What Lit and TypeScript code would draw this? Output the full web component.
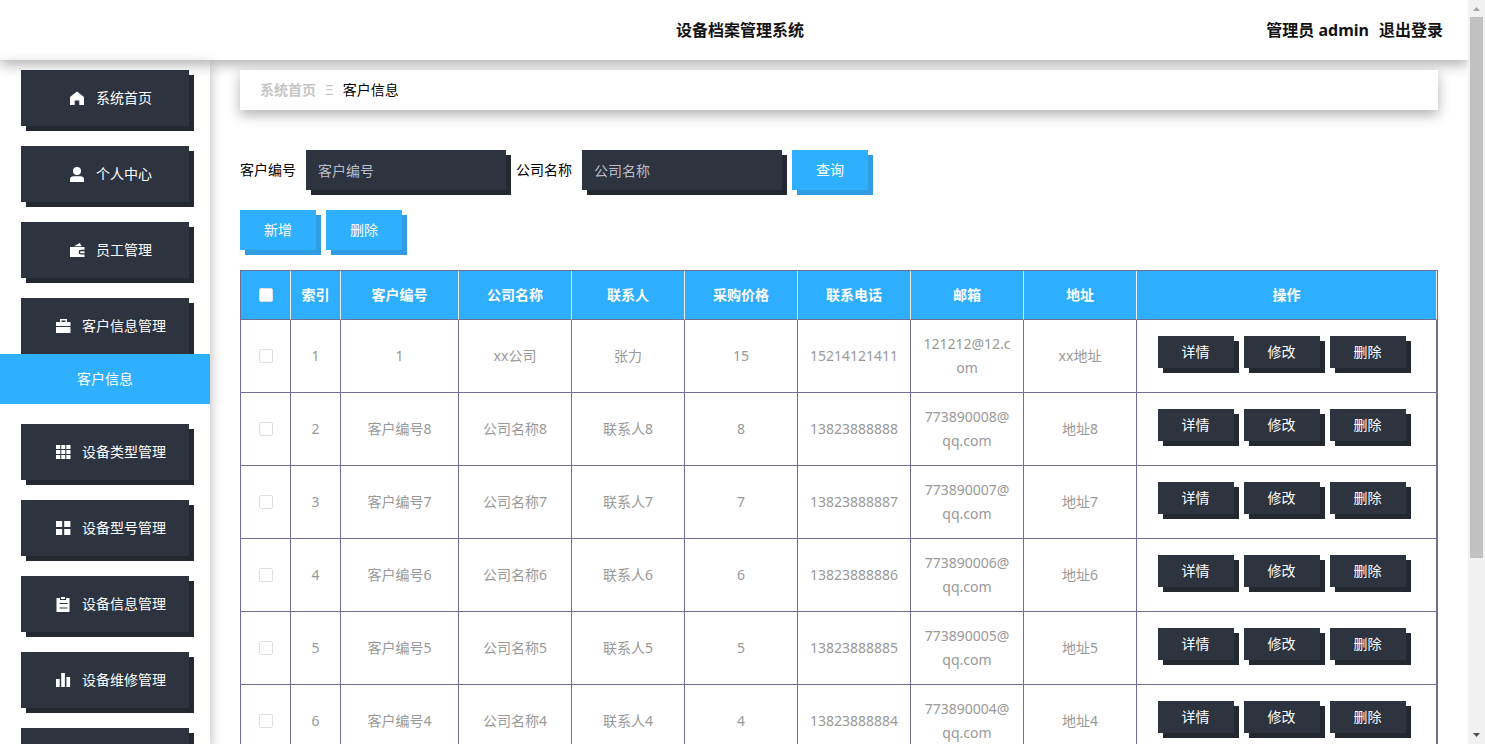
import { LitElement, html, css, svg, type TemplateResult } from "lit";
import { customElement, state } from "lit/decorators.js";

interface MenuItem {
  label: string;
  icon: string;
  children?: string[];
}

interface Customer {
  code: string;
  company: string;
  contact: string;
  price: string;
  phone: string;
  email: string;
  address: string;
}

const icons: Record<string, TemplateResult> = {
  home: svg`<path d="M7 0.5 14 6v8H9.300V9.500H4.700V14H0V6z"/>`,
  user: svg`<circle cx="7" cy="4" r="4"/><path d="M0 15v-2.500C0 10.300 1.500 9.300 3.500 9.300h7c2 0 3.500 1 3.500 3.200V15z"/>`,
  wallet: svg`<path d="M0 4h14.500v2.800H11a2.400 2.400 0 0 0 0 4.800h3.500V14H0z"/><path d="M4 3.300 9.800 0l1.900 3.300z"/><path d="M11 8.200h3.500v2H11a1 1 0 0 1 0-2z"/>`,
  briefcase: svg`<path d="M4 0h7v3h3.500v4H0V3h4zM5.500 1.500V3h4V1.500z" fill-rule="evenodd"/><path d="M0 8h14.500v6H0z"/>`,
  grid: svg`<path d="M0 0h4.300v4H0zM5.300 0h4v4h-4zM10.300 0h4.200v4h-4.200zM0 5h4.300v4H0zM5.300 5h4v4h-4zM10.300 5h4.200v4h-4.200zM0 10h4.300v4H0zM5.300 10h4v4h-4zM10.300 10h4.200v4h-4.200z"/>`,
  blocks: svg`<path d="M0 0h6.200v6H0zM8.200 0h6.200v6H8.200zM0 8h6.200v6H0zM8.200 8h6.200v6H8.200z"/>`,
  clipboard: svg`<path d="M0.500 1H4v2h6V1h3.500v14h-13zM3.500 6v1h8V6zM3.500 10.500v1h8v-1z" fill-rule="evenodd"/><path d="M5 0h4v2H5z"/>`,
  chart: svg`<path d="M0 6h3.700v8H0zM5.200 0h3.700v14H5.200zM10.400 4h3.700v10h-3.700z"/>`,
};

const menu: MenuItem[] = [
  { label: "系统首页", icon: "home" },
  { label: "个人中心", icon: "user" },
  { label: "员工管理", icon: "wallet" },
  { label: "客户信息管理", icon: "briefcase", children: ["客户信息"] },
  { label: "设备类型管理", icon: "grid" },
  { label: "设备型号管理", icon: "blocks" },
  { label: "设备信息管理", icon: "clipboard" },
  { label: "设备维修管理", icon: "chart" },
  { label: "设备保养管理", icon: "grid" },
];

const customers: Customer[] = [
  { code: "1", company: "xx公司", contact: "张力", price: "15", phone: "15214121411", email: "121212@12.com", address: "xx地址" },
  ...[8, 7, 6, 5, 4].map((n) => ({
    code: `客户编号${n}`,
    company: `公司名称${n}`,
    contact: `联系人${n}`,
    price: `${n}`,
    phone: `1382388888${n}`,
    email: `77389000${n}@qq.com`,
    address: `地址${n}`,
  })),
];

const columns = ["客户编号", "公司名称", "联系人", "采购价格", "联系电话", "邮箱", "地址"];

@customElement("side-menu")
export class SideMenu extends LitElement {
  static styles = css`
    :host {
      display: block;
      flex: none;
      width: 210px;
      box-sizing: border-box;
      padding-top: 10px;
      box-shadow: 0 5px 12px rgba(0, 0, 0, 0.3);
    }
    .item {
      display: flex;
      align-items: center;
      justify-content: center;
      gap: 12px;
      width: 168px;
      height: 56px;
      margin: 0 auto 20px;
      padding: 0 0 0 12px;
      border: 0;
      background: #2d333f;
      box-shadow: 5px 5px 0 #232831;
      color: #fff;
      font: inherit;
      cursor: pointer;
    }
    .item.open {
      margin-bottom: 0;
    }
    .icon {
      width: 14px;
      height: 14px;
      fill: #fff;
      overflow: visible;
    }
    .child {
      position: relative;
      display: block;
      margin-bottom: 20px;
      background: #2eb0ff;
      color: #fff;
      line-height: 50px;
      text-align: center;
      text-decoration: none;
    }
  `;

  render() {
    return html`<nav>
      ${menu.map(
        (m) => html`
          <button class="item ${m.children ? "open" : ""}">
            <svg class="icon" viewBox="0 0 14 14" aria-hidden="true">${icons[m.icon]}</svg>
            <span>${m.label}</span>
          </button>
          ${m.children?.map((c) => html`<a class="child" href="#">${c}</a>`)}
        `,
      )}
    </nav>`;
  }
}

@customElement("scroll-track")
export class ScrollTrack extends LitElement {
  static styles = css`
    :host {
      display: flex;
      flex: none;
      flex-direction: column;
      width: 17px;
      background: #f1f1f1;
    }
    .arrow {
      display: block;
      width: 17px;
      height: 17px;
      padding: 0;
      border: 0;
      background: none;
    }
    .arrow svg {
      display: block;
      width: 17px;
      height: 17px;
    }
    .up {
      fill: #a3a3a3;
    }
    .down {
      fill: #505050;
    }
    .track {
      flex: 1;
      padding: 0 2px;
    }
    .thumb {
      height: 76.2%;
      background: #c1c1c1;
    }
  `;

  render() {
    return html`
      <button class="arrow up" aria-label="向上滚动">
        <svg viewBox="0 0 17 17"><path d="M5 11h7L8.500 7z" /></svg>
      </button>
      <div class="track"><div class="thumb"></div></div>
      <button class="arrow down" aria-label="向下滚动">
        <svg viewBox="0 0 17 17"><path d="M5 6h7l-3.500 4z" /></svg>
      </button>
    `;
  }
}

@customElement("customer-table")
export class CustomerTable extends LitElement {
  @state() private selected = new Set<number>();

  static styles = css`
    :host {
      display: block;
    }
    table {
      width: 100%;
      table-layout: fixed;
      border: 1px solid #6f6e96;
      border-spacing: 0;
      color: #999;
      text-align: center;
      line-height: 24px;
    }
    .narrow {
      width: 50px;
    }
    .code {
      width: 118px;
    }
    .ops {
      width: 300px;
    }
    th,
    td {
      box-sizing: border-box;
      padding: 12px 10px;
      border-right: 1px solid #6f6e96;
      border-bottom: 1px solid #6f6e96;
      word-break: break-all;
    }
    td {
      height: 73px;
    }
    th {
      height: 49px;
      background: #2eaeff;
      border-right-color: #eee;
      color: #fff;
      font-weight: 700;
    }
    .tick {
      appearance: none;
      display: block;
      box-sizing: border-box;
      width: 14px;
      height: 14px;
      margin: 0 auto;
      border: 1px solid #dcdfe6;
      border-radius: 2px;
      background: #fff;
    }
    .tick:checked {
      background: #2eb0ff;
    }
    .actions {
      display: flex;
      justify-content: center;
      gap: 10px;
      padding: 0 10px 8px 0;
    }
    .action {
      width: 76px;
      height: 32px;
      padding: 0;
      border: 0;
      background: #2d333f;
      box-shadow: 5px 5px 0 #232831;
      color: #fff;
      font: inherit;
      cursor: pointer;
    }
  `;

  private toggle(i: number) {
    const next = new Set(this.selected);
    if (!next.delete(i)) next.add(i);
    this.selected = next;
  }

  private toggleAll() {
    this.selected = new Set(this.selected.size === customers.length ? [] : customers.keys());
  }

  render() {
    return html`<table>
      <colgroup>
        <col class="narrow" />
        <col class="narrow" />
        <col class="code" />
        <col span="6" />
        <col class="ops" />
      </colgroup>
      <thead>
        <tr>
          <th>
            <input class="tick" type="checkbox" aria-label="全选"
              .checked=${this.selected.size === customers.length} @change=${this.toggleAll} />
          </th>
          <th>索引</th>
          ${columns.map((c) => html`<th>${c}</th>`)}
          <th>操作</th>
        </tr>
      </thead>
      <tbody>
        ${customers.map(
          (c, i) => html`<tr>
            <td>
              <input class="tick" type="checkbox" aria-label="选择第${i + 1}行"
                .checked=${this.selected.has(i)} @change=${() => this.toggle(i)} />
            </td>
            <td>${i + 1}</td>
            <td>${c.code}</td>
            <td>${c.company}</td>
            <td>${c.contact}</td>
            <td>${c.price}</td>
            <td>${c.phone}</td>
            <td>${c.email}</td>
            <td>${c.address}</td>
            <td>
              <div class="actions">
                <button class="action">详情</button>
                <button class="action">修改</button>
                <button class="action">删除</button>
              </div>
            </td>
          </tr>`,
        )}
      </tbody>
    </table>`;
  }
}

@customElement("app-root")
export class AppRoot extends LitElement {
  static styles = css`
    :host {
      display: flex;
      height: 100vh;
      overflow: hidden;
      background: #fff;
      color: #000;
      font: 14px/20px "Noto Sans", "Noto Sans CJK SC", sans-serif;
    }
    .page {
      flex: 1;
      min-width: 0;
      display: flex;
      flex-direction: column;
      overflow: hidden;
    }
    .header {
      flex: none;
      display: grid;
      grid-template-columns: 1fr auto 1fr;
      align-items: center;
      height: 60px;
      padding: 0 20px 0 32px;
      box-sizing: border-box;
      background: #fff;
      box-shadow: 0 5px 12px rgba(0, 0, 0, 0.3);
      color: #131313;
      font-size: 16px;
      font-weight: 700;
    }
    .title {
      grid-column: 2;
      margin: 0;
      font: inherit;
    }
    .account {
      display: flex;
      justify-content: flex-end;
      gap: 10px;
      padding-right: 5px;
    }
    .logout {
      color: inherit;
      text-decoration: none;
    }
    .body {
      flex: 1;
      min-height: 0;
      display: flex;
    }
    .main {
      flex: 1;
      min-width: 0;
      padding: 10px 30px 0;
    }
    .crumbs {
      display: flex;
      align-items: center;
      gap: 9px;
      height: 40px;
      margin-bottom: 40px;
      padding: 0 20px;
      background: #fff;
      box-shadow: 0 5px 12px rgba(0, 0, 0, 0.3);
    }
    .home {
      color: #c6c6c6;
      font-weight: 700;
      text-decoration: none;
    }
    .sep {
      color: #c0c4cc;
    }
    .bar {
      display: flex;
      align-items: center;
      gap: 10px;
      margin-bottom: 20px;
    }
    .field {
      box-sizing: border-box;
      width: 200px;
      height: 40px;
      padding: 0 12px;
      border: 0;
      background: #2d333f;
      box-shadow: 5px 5px 0 #232831;
      color: #fff;
      font: inherit;
    }
    .field::placeholder {
      color: #b9bec9;
    }
    .primary {
      width: 76px;
      height: 40px;
      padding: 0;
      border: 0;
      background: #2eb0ff;
      box-shadow: 5px 5px 0 #2f9ddf;
      color: #fff;
      font: inherit;
      cursor: pointer;
    }
  `;

  render() {
    return html`
      <div class="page">
        <header class="header">
          <h1 class="title">设备档案管理系统</h1>
          <div class="account">
            <span>管理员 admin</span>
            <a class="logout" href="#">退出登录</a>
          </div>
        </header>
        <div class="body">
          <side-menu></side-menu>
          <main class="main">
            <div class="crumbs">
              <a class="home" href="#">系统首页</a>
              <span class="sep">Ξ</span>
              <span>客户信息</span>
            </div>
            <form class="bar" @submit=${(e: Event) => e.preventDefault()}>
              <label for="code">客户编号</label>
              <input class="field" id="code" type="text" placeholder="客户编号" />
              <label for="company">公司名称</label>
              <input class="field" id="company" type="text" placeholder="公司名称" />
              <button class="primary" type="submit">查询</button>
            </form>
            <div class="bar">
              <button class="primary">新增</button>
              <button class="primary">删除</button>
            </div>
            <customer-table></customer-table>
          </main>
        </div>
      </div>
      <scroll-track></scroll-track>
    `;
  }
}
